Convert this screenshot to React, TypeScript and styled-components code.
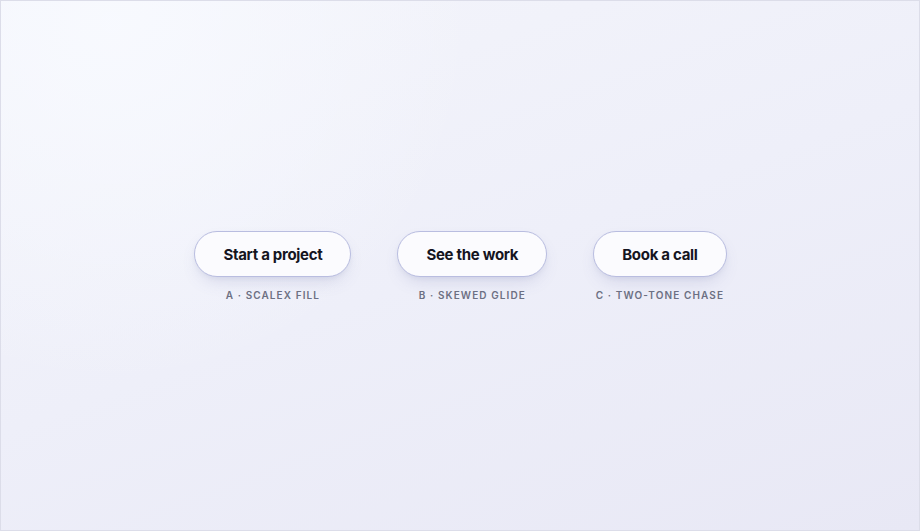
import styled, { createGlobalStyle } from "styled-components"

const GlobalStyle = createGlobalStyle`
  html, body {
    margin: 0;
    padding: 0;
  }
  body {
    font-family: Inter, "Noto Sans", "Liberation Sans", sans-serif;
    -webkit-font-smoothing: antialiased;
  }
`

// Full-viewport stage with the soft lavender wash
const Stage = styled.main`
  box-sizing: border-box;
  width: 100vw;
  height: 100vh;
  border: 1px solid #dcdde9;
  background:
    radial-gradient(circle at 12% 4%, rgba(248, 250, 255, 0.9) 0, rgba(248, 250, 255, 0) 38%),
    linear-gradient(160deg, #f4f5fb 0%, #eeeff9 50%, #e8e8f5 100%);
  display: flex;
  align-items: center;
  justify-content: center;
`

const Row = styled.div`
  display: flex;
  align-items: flex-start;
  gap: 46px;
  margin-top: 1px;
  margin-left: 1px;
`

const Demo = styled.div`
  display: flex;
  flex-direction: column;
  align-items: center;
  gap: 12px;
`

const PillButton = styled.button`
  box-sizing: border-box;
  height: 46px;
  padding: 1px 28px 0;
  border-radius: 999px;
  border: 1px solid #b9bde0;
  background: #fbfbfe;
  color: #15151f;
  font-family: Inter, "Noto Sans", sans-serif;
  font-size: 15px;
  font-weight: 700;
  letter-spacing: -0.3px;
  cursor: pointer;
  box-shadow:
    0 8px 18px -6px rgba(90, 96, 160, 0.22),
    0 2px 4px rgba(90, 96, 160, 0.06);
`

const Caption = styled.span`
  font-family: Inter, "Noto Sans", sans-serif;
  font-size: 10px;
  font-weight: 600;
  letter-spacing: 1.1px;
  color: #6c7083;
  text-transform: uppercase;
`

const demos = [
  { label: "Start a project", caption: "A · Scalex fill" },
  { label: "See the work", caption: "B · Skewed glide" },
  { label: "Book a call", caption: "C · Two-tone chase" },
]

export default function App() {
  return (
    <>
      <GlobalStyle />
      <Stage>
        <Row>
          {demos.map((d) => (
            <Demo key={d.label}>
              <PillButton>{d.label}</PillButton>
              <Caption>{d.caption}</Caption>
            </Demo>
          ))}
        </Row>
      </Stage>
    </>
  )
}
